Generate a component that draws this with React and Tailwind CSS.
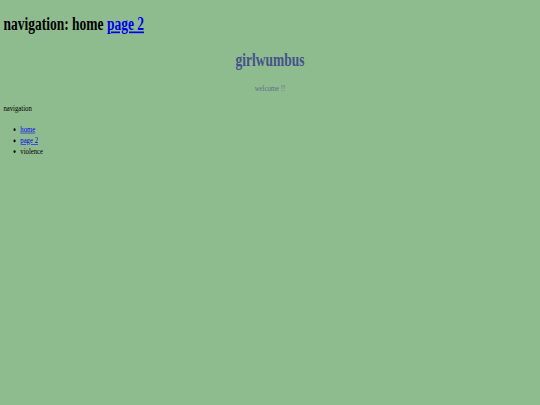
import React from "react";

export default function App() {
  return (
    <div className="w-[540px] h-[405px] overflow-hidden bg-[#8fbc8f]">
      {/* page was captured at 1280x720 and squeezed into 540x405 */}
      <div
        className="w-[1280px] h-[720px] origin-top-left scale-x-[0.421875] scale-y-[0.5625] bg-[#8fbc8f] px-2 py-[1px] text-black text-[16px]"
        style={{ fontFamily: '"Liberation Serif", "Times New Roman", serif' }}
      >
        <h1 className="mt-[24px] mb-[21px] text-[32px] font-bold leading-[37px]">
          navigation: home{" "}
          <a href="#" className="text-[#0000ee] underline">
            page 2
          </a>
        </h1>
        <h1 className="mt-[26px] text-center text-[32px] font-bold leading-[37px] text-[#44518c]">
          girlwumbus
        </h1>
        <p className="mt-[23px] text-center text-[#5c6e8c] leading-[18px]">welcome !!</p>
        <p className="mt-[18px] leading-[18px]">navigation</p>
        <ul className="mt-[18px] list-disc pl-10 leading-[19.5px]">
          <li>
            <a href="#" className="text-[#0000ee] underline">home</a>
          </li>
          <li>
            <a href="#" className="text-[#0000ee] underline">page 2</a>
          </li>
          <li>violence</li>
        </ul>
      </div>
    </div>
  );
}
